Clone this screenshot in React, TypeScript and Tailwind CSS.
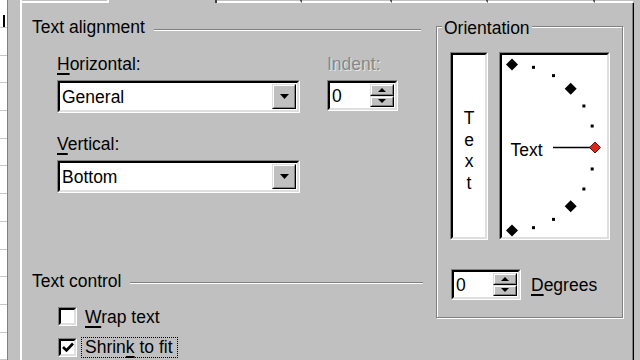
import type { ReactNode } from 'react'

const FONT = "font-['Liberation_Sans',Arial,sans-serif]"

// classic 3d edges
const sunkenOuter = 'border border-t-[#808080] border-l-[#808080] border-b-white border-r-white'
const sunkenInner = 'border-2 border-t-black border-l-black border-b-[#dfdfdf] border-r-[#dfdfdf]'
const raisedOuter = 'border border-t-[#dfdfdf] border-l-[#dfdfdf] border-b-black border-r-black'
const raisedInner = 'border border-t-white border-l-white border-b-[#808080] border-r-[#808080]'

const U = ({ children }: { children: ReactNode }) => (
  <u className="underline decoration-[1.5px] underline-offset-[3px]">{children}</u>
)

function Arrow({ up = false, w = 9, h = 5 }: { up?: boolean; w?: number; h?: number }) {
  return (
    <svg width={w} height={h} viewBox={`0 0 ${w} ${h}`}>
      <polygon points={up ? `0,${h} ${w},${h} ${w / 2},0` : `0,0 ${w},0 ${w / 2},${h}`} fill="#000" />
    </svg>
  )
}

function Combo({ value }: { value: string }) {
  return (
    <div className={`w-[243px] h-[33px] ${sunkenOuter}`}>
      <div className={`h-full ${sunkenInner} bg-white flex items-stretch`}>
        <span className="flex-1 pl-[2px] self-center">{value}</span>
        <div className={`w-[24px] my-[1px] mr-[1px] ${raisedOuter}`}>
          <div className={`h-full ${raisedInner} bg-[#c0c0c0] flex items-center justify-center`}>
            <Arrow />
          </div>
        </div>
      </div>
    </div>
  )
}

function Spinner({ value, w }: { value: string; w: string }) {
  return (
    <div className={`${w} h-[31px] ${sunkenOuter}`}>
      <div className={`h-full ${sunkenInner} bg-white flex items-stretch`}>
        <span className="flex-1 pl-[2px] self-center">{value}</span>
        <div className="w-[24px] flex flex-col my-[1px] mr-[1px]">
          {[true, false].map(up => (
            <div key={String(up)} className={`flex-1 ${raisedOuter}`}>
              <div className={`h-full ${raisedInner} bg-[#c0c0c0] flex items-center justify-center`}>
                <Arrow up={up} w={8} h={4} />
              </div>
            </div>
          ))}
        </div>
      </div>
    </div>
  )
}

function Check({ checked }: { checked?: boolean }) {
  return (
    <div className={`w-[19px] h-[19px] shrink-0 ${sunkenOuter}`}>
      <div className={`h-full ${sunkenInner} bg-white flex items-center justify-center`}>
        {checked && (
          <svg width="12" height="11" viewBox="0 0 12 11">
            <polyline points="1,5 4.5,8.5 11,1.5" fill="none" stroke="#000" strokeWidth="2.6" />
          </svg>
        )}
      </div>
    </div>
  )
}

function Etched({ label }: { label: string }) {
  return (
    <div className="flex h-[20px]">
      <span>{label}</span>
      <div className="flex-1 ml-[9px] mt-[12px] h-[2px] border-t border-t-[#808080] border-b border-b-white" />
    </div>
  )
}

function Dial() {
  const cx = 10, cy = 92.5, r = 83
  const pts = Array.from({ length: 13 }, (_, i) => {
    const a = ((90 - i * 15) * Math.PI) / 180
    return { x: cx + r * Math.cos(a), y: cy - r * Math.sin(a), big: i % 3 === 0, red: i === 6 }
  })
  return (
    <svg width="107" height="184" viewBox="0 0 107 184">
      {pts.map((p, i) => {
        if (!p.big) return <rect key={i} x={p.x - 1.5} y={p.y - 1.5} width="3" height="3" fill="#000" />
        const s = p.red ? 5.5 : 6
        return (
          <polygon key={i}
            points={`${p.x},${p.y - s} ${p.x + s},${p.y} ${p.x},${p.y + s} ${p.x - s},${p.y}`}
            fill={p.red ? '#d42a1e' : '#000'} stroke={p.red ? '#6a1410' : 'none'} strokeWidth="1" />
        )
      })}
      <line x1="51" y1="92.5" x2="88" y2="92.5" stroke="#000" strokeWidth="1.5" />
      <text x="8.5" y="100.5" fontFamily="Liberation Sans, Arial, sans-serif" fontSize="17.5" fill="#000">Text</text>
    </svg>
  )
}

export default function App() {
  const tabs = [
    { w: 'w-[85px]', active: false },
    { w: 'w-[110px]', active: true },
    { w: 'w-[85px]', active: false, tick: true },
    { w: 'w-[90px]', active: false, tick: true },
    { w: 'w-[96px]', active: false, tick: true },
    { w: 'w-[107px]', active: false, tick: true },
  ]

  return (
    <div className={`w-[640px] h-[360px] overflow-hidden bg-[#c0c0c0] flex ${FONT} text-[17.5px] leading-[20px] text-black`}>
      {/* sheet behind the dialog */}
      <div className="w-[7px] bg-white flex flex-col">
        <div className="h-[35px] border-b border-[#c6c6c6] relative">
          <div className="w-[2px] h-[12px] bg-black ml-[3px] mt-[15px]" />
        </div>
        {Array.from({ length: 12 }, (_, i) => (
          <div key={i} className="h-[27.7px] shrink-0 border-b border-[#c6c6c6]" />
        ))}
      </div>
      <div className="w-[1px] bg-[#808080]" />
      <div className="w-[12px]" />

      {/* tab page */}
      <div className="w-[613px] flex flex-col border-l-2 border-white">
        <div className="h-[3px] flex shrink-0">
          {tabs.map((t, i) => (
            <div key={i}
              className={`${t.w} shrink-0 ${t.active ? 'border-l-2 border-white border-r-2 border-r-[#404040]' : 'border-b-2 border-white'} ${t.tick ? 'border-r-2 border-r-[#505050]' : ''}`} />
          ))}
          <div className="flex-1 border-b-2 border-white" />
        </div>

        <div className="flex-1 flex pl-[10px] pt-[14px] border-r border-r-[#808080] shadow-[1px_0_0_#000]">
          {/* left column */}
          <div className="w-[389px] flex flex-col">
            <Etched label="Text alignment" />

            <div className="flex pl-[25px] mt-[17px]">
              <div className="w-[270px] flex flex-col">
                <span className="h-[20px]"><U>H</U>orizontal:</span>
                <div className="mt-[6px]"><Combo value="General" /></div>
                <span className="h-[20px] mt-[21px]"><U>V</U>ertical:</span>
                <div className="mt-[6px]"><Combo value="Bottom" /></div>
              </div>
              <div className="flex flex-col">
                <span className="h-[20px] text-[#878787] [text-shadow:1px_1px_0_#e6e6e6]">Indent:</span>
                <div className="mt-[6px]"><Spinner value="0" w="w-[71px]" /></div>
              </div>
            </div>

            <div className="mt-[78px]">
              <div className="flex h-[20px]">
                <span>Text control</span>
                <div className="flex-1 ml-[9px] mt-[11px] h-[2px] border-t border-t-[#808080] border-b border-b-white mr-[-2px]" />
              </div>
            </div>

            <div className="flex items-center pl-[26px] mt-[16px] h-[19px]">
              <Check />
              <span className="ml-[8px]"><U>W</U>rap text</span>
            </div>
            <div className="flex items-center pl-[26px] mt-[11px] h-[21px]">
              <Check checked />
              <span className="ml-[4px] h-[21px] pl-[3px] pr-[4px] border border-dotted border-black leading-[19px]">
                Shrin<U>k</U> to fit
              </span>
            </div>
          </div>

          {/* orientation */}
          <div className="ml-[15px] mt-[9px] w-[187px] h-[292px] relative border border-[#808080] shadow-[inset_1px_1px_0_#fff,1px_1px_0_#fff]">
            <span className="absolute -top-[9px] left-[5px] px-[2px] bg-[#c0c0c0]">Orientation</span>
            <div className="flex flex-col pl-[13px] pt-[25px]">
              <div className="flex">
                <div className={`w-[38px] h-[188px] ${sunkenOuter}`}>
                  <div className={`h-full ${sunkenInner} bg-white flex flex-col items-center pt-[53px] leading-[21.5px]`}>
                    <span>T</span><span>e</span><span>x</span><span>t</span>
                  </div>
                </div>
                <div className={`ml-[11px] w-[111px] h-[188px] ${sunkenOuter}`}>
                  <div className={`h-full ${sunkenInner} bg-white`}>
                    <Dial />
                  </div>
                </div>
              </div>
              <div className="flex items-center mt-[29px] ml-[1px]">
                <Spinner value="0" w="w-[70px]" />
                <span className="ml-[10px]"><U>D</U>egrees</span>
              </div>
            </div>
          </div>
        </div>
      </div>
    </div>
  )
}
